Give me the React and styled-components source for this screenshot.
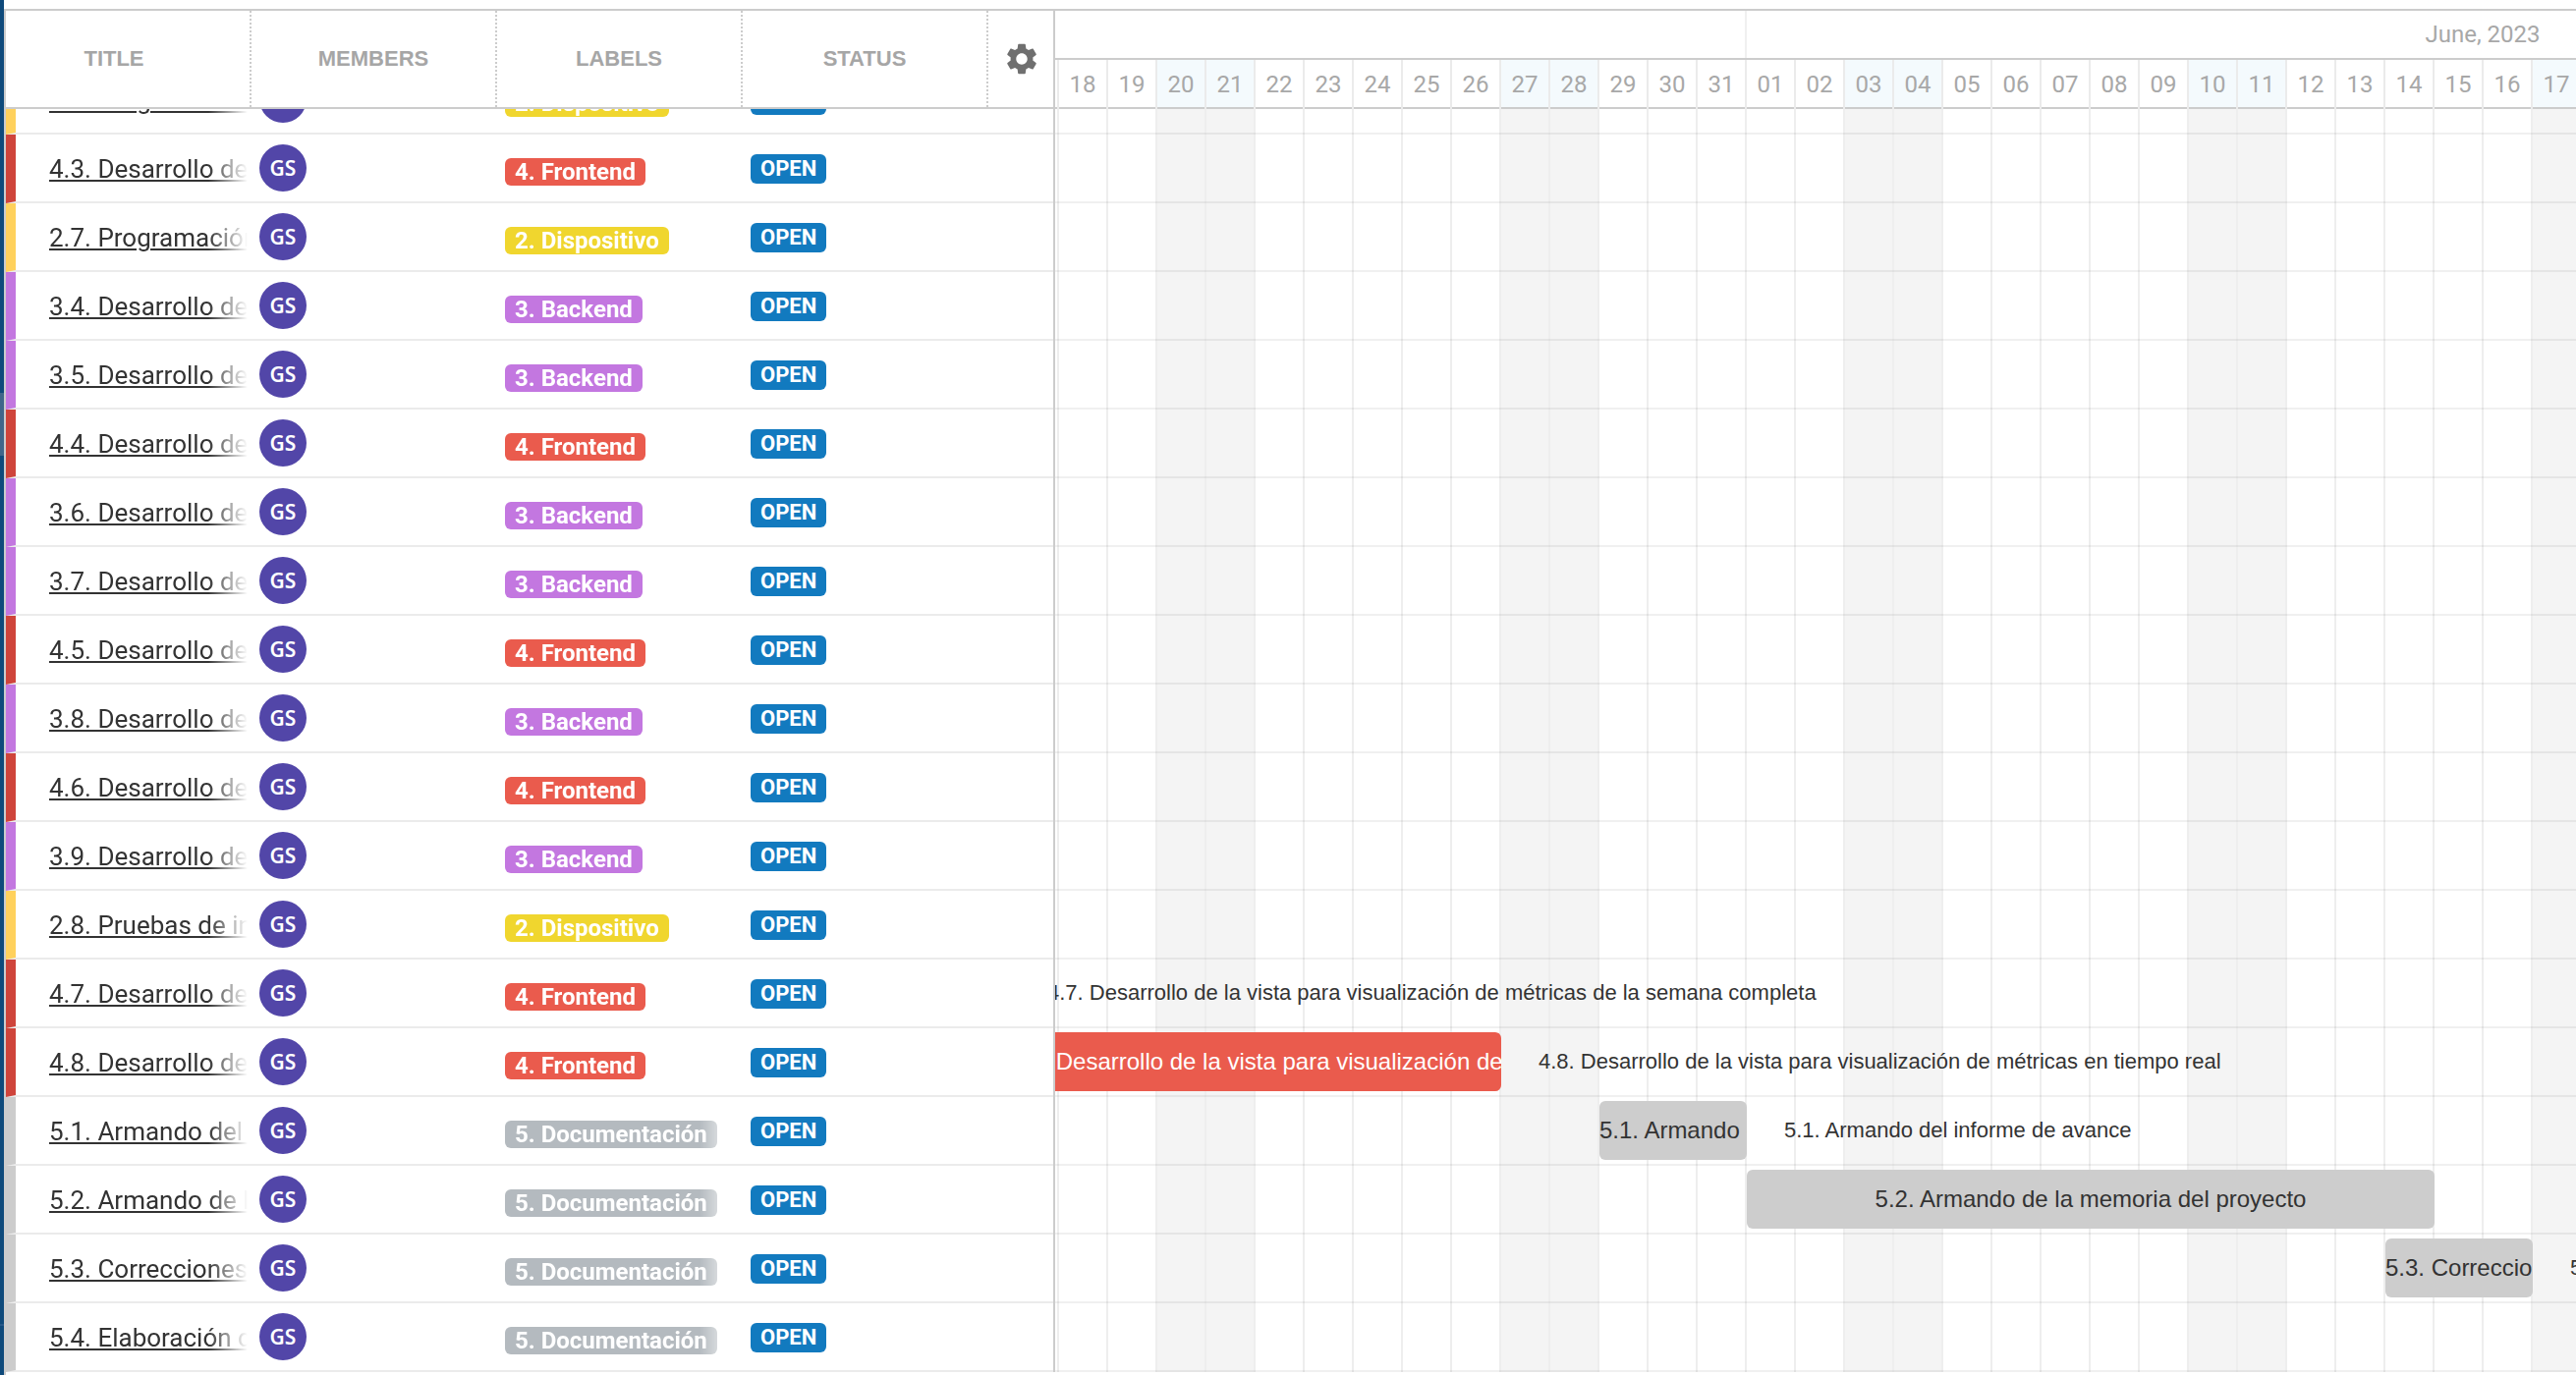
import React from "react";
import styled, { createGlobalStyle } from "styled-components";
import { MdSettings } from "react-icons/md";

const LINE = "#cccccc";
const SOFT_LINE = "#ebebeb";
const DAY = 50;
const ROW = 70;

const KINDS = {
  device: { label: "2. Dispositivo", tag: "#f0d62e", edge: "#ffd15c" },
  backend: { label: "3. Backend", tag: "#c377e0", edge: "#c377e0" },
  frontend: { label: "4. Frontend", tag: "#ea5b4d", edge: "#cf443b" },
  docs: { label: "5. Documentación", tag: "#b4babf", edge: "#cccccc" },
};

/* start and days are counted in day columns from May 17 */
const TASKS = [
  { kind: "device", title: "2.6. Programación del dispositivo" },
  { kind: "frontend", title: "4.3. Desarrollo de la vista" },
  { kind: "device", title: "2.7. Programación del dispositivo" },
  { kind: "backend", title: "3.4. Desarrollo de la API" },
  { kind: "backend", title: "3.5. Desarrollo de la API" },
  { kind: "frontend", title: "4.4. Desarrollo de la vista" },
  { kind: "backend", title: "3.6. Desarrollo de la API" },
  { kind: "backend", title: "3.7. Desarrollo de la API" },
  { kind: "frontend", title: "4.5. Desarrollo de la vista" },
  { kind: "backend", title: "3.8. Desarrollo de la API" },
  { kind: "frontend", title: "4.6. Desarrollo de la vista" },
  { kind: "backend", title: "3.9. Desarrollo de la API" },
  { kind: "device", title: "2.8. Pruebas de integración" },
  {
    kind: "frontend",
    title: "4.7. Desarrollo de la vista para visualización de métricas de la semana completa",
    start: 0,
    days: 0,
  },
  {
    kind: "frontend",
    title: "4.8. Desarrollo de la vista para visualización de métricas en tiempo real",
    start: 0,
    days: 10,
  },
  { kind: "docs", title: "5.1. Armando del informe de avance", start: 12, days: 3 },
  { kind: "docs", title: "5.2. Armando de la memoria del proyecto", start: 15, days: 14, fits: true },
  { kind: "docs", title: "5.3. Correcciones de la memoria", start: 28, days: 3 },
  { kind: "docs", title: "5.4. Elaboración de la presentación" },
];

const DAYS = Array.from({ length: 32 }, (_, i) => {
  const date = new Date(Date.UTC(2023, 4, 17 + i));
  const weekday = date.getUTCDay();
  return {
    text: String(date.getUTCDate()).padStart(2, "0"),
    weekend: weekday === 0 || weekday === 6,
  };
});

const GlobalStyle = createGlobalStyle`
  *, *::before, *::after { box-sizing: border-box; }
  body {
    margin: 0;
    background: #ffffff;
    color: #333333;
    font-family: Roboto, "Liberation Sans", sans-serif;
    overflow: hidden;
  }
`;

const Page = styled.div`
  min-height: 100vh;
  display: flex;
`;

/* sliver of the page behind the board, with the edge of its side panel handle */
const Backdrop = styled.div`
  flex: none;
  width: 4px;
  background: linear-gradient(
    #0f4a7b 400px,
    #3f668a 400px 464px,
    #0f4a7b 464px 1348px,
    #26598a 1348px 1350px,
    #0f4a7b 1350px
  );
`;

const Board = styled.main`
  flex: 1;
  min-width: 0;
  margin-top: 9px;
  display: flex;
  align-items: flex-start;
  border-top: 2px solid ${LINE};

  &::before {
    content: "";
    align-self: stretch;
    flex: none;
    width: 2px;
    background: ${LINE};
  }
`;

const Table = styled.table`
  display: block;
  flex: none;
  border-right: 2px solid ${LINE};
  border-spacing: 0;
`;

const TableHead = styled.thead`
  display: block;
`;

const HeadRow = styled.tr`
  display: flex;
  height: 100px;
  border-bottom: 2px solid ${LINE};
`;

const HeadCell = styled.th`
  width: 250px;
  padding: 0 ${(p) => (p.$lead ? 28 : 0)}px 0 0;
  display: flex;
  align-items: center;
  justify-content: center;
  border-right: 2px dotted ${LINE};
  color: #a6a6a6;
  font: 700 22px/26px "Liberation Sans", sans-serif;
`;

const ToolCell = styled.th`
  width: 66px;
  padding: 0 0 0 2px;
  display: flex;
  align-items: center;
  justify-content: center;
`;

const GearButton = styled.button`
  display: flex;
  padding: 0;
  border: 0;
  background: none;
  color: #6f6f6f;
  font-size: 38px;
  cursor: pointer;
`;

const TableBody = styled.tbody`
  display: block;
  overflow: hidden;

  & > tr:first-child {
    margin-top: -44px;
  }
`;

const Row = styled.tr`
  display: flex;
  height: ${ROW}px;
  border-left: 10px solid ${(p) => p.$edge};
  border-bottom: 2px solid ${SOFT_LINE};
`;

const Cell = styled.td`
  width: 250px;
  padding: ${(p) => p.$drop || 0}px 4px 0 8px;
  display: flex;
  align-items: center;
`;

const TitleCell = styled(Cell)`
  width: 240px;
  padding: 2px 4px 0 0;
`;

const Fade = styled.div`
  flex: 1;
  min-width: 0;
  padding-left: ${(p) => p.$indent || 0}px;
  overflow: hidden;
  display: flex;
  mask-image: linear-gradient(to right, #000 calc(100% - 40px), transparent);
`;

const TitleLink = styled.a`
  color: #333333;
  font-size: 26px;
  line-height: 34px;
  white-space: nowrap;
  text-decoration: underline;
  text-decoration-thickness: 2px;
  text-underline-offset: 2px;
`;

const Avatar = styled.span`
  width: 48px;
  height: 48px;
  border-radius: 50%;
  background: #5246a8;
  color: #ffffff;
  display: flex;
  align-items: center;
  justify-content: center;
  font: 600 21px/24px "Noto Sans", sans-serif;
`;

const Tag = styled.span`
  height: 28px;
  padding: 0 10px;
  border-radius: 6px;
  background: ${(p) => p.$color};
  color: #ffffff;
  font-weight: 700;
  font-size: 24px;
  line-height: 28px;
  white-space: nowrap;
`;

const Status = styled.span`
  height: 30px;
  padding: 0 10px;
  border-radius: 6px;
  background: #127abf;
  color: #ffffff;
  font-weight: 700;
  font-size: 22px;
  line-height: 30px;
`;

const Timeline = styled.section`
  flex: 1;
  min-width: 0;
  overflow: hidden;
`;

/* scrolled so that the first column starts left of the pane */
const Track = styled.div`
  width: ${DAYS.length * DAY}px;
  margin-left: -46px;
`;

const Months = styled.div`
  display: flex;
  height: 50px;
  border-bottom: 2px solid ${LINE};
`;

const Month = styled.div`
  flex: none;
  width: ${(p) => p.$days * DAY}px;
  border-right: 2px solid #f0f0f0;
  text-align: center;
  color: #a8a8a8;
  font-size: 24px;
  line-height: 48px;
`;

const DayHeads = styled.div`
  display: flex;
  height: 50px;
`;

const DayHead = styled.div`
  width: ${DAY}px;
  border-right: 2px solid ${SOFT_LINE};
  box-shadow: inset 0 -2px 0 ${LINE};
  background: ${(p) => (p.$weekend ? "#f4fafd" : "#ffffff")};
  text-align: center;
  color: #a8a8a8;
  font-size: 24px;
  line-height: 50px;
`;

const Canvas = styled.div`
  display: grid;
  grid-template-columns: repeat(${DAYS.length}, ${DAY}px);
  grid-template-rows: 26px repeat(${TASKS.length - 1}, ${ROW}px);
`;

const DayColumn = styled.div`
  grid-column: ${(p) => p.$col};
  grid-row: 1 / -1;
  border-right: 2px solid #eeeeee;
  background: ${(p) => (p.$weekend ? "#f4f4f4" : "transparent")};
`;

const Lane = styled.div`
  grid-column: 1 / -1;
  grid-row: ${(p) => p.$row};
  display: flex;
  align-items: center;
  border-bottom: 2px solid rgba(0, 0, 0, 0.06);
`;

const Bar = styled.div`
  flex: none;
  height: 60px;
  border-radius: 6px;
  overflow: hidden;
  background: ${(p) => p.$color};
  color: ${(p) => (p.$light ? "#ffffff" : "#333333")};
  text-align: ${(p) => (p.$center ? "center" : "left")};
  font: 24px/60px "Liberation Sans", sans-serif;
  white-space: nowrap;
`;

const BarNote = styled.span`
  padding-left: 38px;
  color: #333333;
  font: 22px/60px "Liberation Sans", sans-serif;
  white-space: nowrap;
`;

function TaskRow({ task }) {
  const kind = KINDS[task.kind];
  return (
    <Row $edge={kind.edge}>
      <TitleCell>
        <Fade $indent={34}>
          <TitleLink href="#">{task.title}</TitleLink>
        </Fade>
      </TitleCell>
      <Cell>
        <Avatar>GS</Avatar>
      </Cell>
      <Cell $drop={8}>
        <Fade>
          <Tag $color={kind.tag}>{kind.label}</Tag>
        </Fade>
      </Cell>
      <Cell $drop={2}>
        <Status>OPEN</Status>
      </Cell>
    </Row>
  );
}

function TaskLane({ task, row }) {
  const frontend = task.kind === "frontend";
  return (
    <Lane $row={row}>
      {task.days > 0 && (
        <Bar
          $color={frontend ? KINDS.frontend.tag : "#cdcdcd"}
          $light={frontend}
          $center={task.fits}
          style={{ marginLeft: task.start * DAY, width: task.days * DAY }}
        >
          {task.title}
        </Bar>
      )}
      {task.days !== undefined && !task.fits && <BarNote>{task.title}</BarNote>}
    </Lane>
  );
}

export default function App() {
  return (
    <>
      <GlobalStyle />
      <Page>
        <Backdrop />
        <Board>
          <Table>
            <TableHead>
              <HeadRow>
                <HeadCell $lead>TITLE</HeadCell>
                <HeadCell>MEMBERS</HeadCell>
                <HeadCell>LABELS</HeadCell>
                <HeadCell>STATUS</HeadCell>
                <ToolCell>
                  <GearButton type="button" aria-label="Settings">
                    <MdSettings />
                  </GearButton>
                </ToolCell>
              </HeadRow>
            </TableHead>
            <TableBody>
              {TASKS.map((task) => (
                <TaskRow key={task.title} task={task} />
              ))}
            </TableBody>
          </Table>
          <Timeline>
            <Track>
              <Months>
                <Month $days={15} />
                <Month $days={30}>June, 2023</Month>
              </Months>
              <DayHeads>
                {DAYS.map((day, i) => (
                  <DayHead key={i} $weekend={day.weekend}>
                    {day.text}
                  </DayHead>
                ))}
              </DayHeads>
              <Canvas>
                {DAYS.map((day, i) => (
                  <DayColumn key={i} $col={i + 1} $weekend={day.weekend} />
                ))}
                {TASKS.map((task, i) => (
                  <TaskLane key={task.title} task={task} row={i + 1} />
                ))}
              </Canvas>
            </Track>
          </Timeline>
        </Board>
      </Page>
    </>
  );
}
